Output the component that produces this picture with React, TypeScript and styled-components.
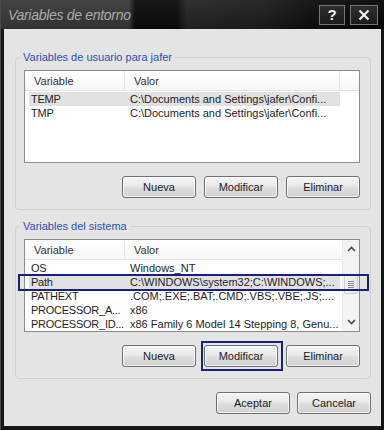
import React from 'react';
import styled, { createGlobalStyle, css } from 'styled-components';

const GlobalStyle = createGlobalStyle`
  html, body {
    margin: 0;
    padding: 0;
    background: #1b1b1b;
  }
  * {
    box-sizing: border-box;
  }
`;

const UI_FONT = `"Liberation Sans", Arial, sans-serif`;

// Window chrome
const Window = styled.div`
  width: 384px;
  height: 430px;
  display: flex;
  flex-direction: column;
  background: #161616;
  border-left: 1px solid #4a4a4a;
  font-family: ${UI_FONT};
  font-size: 11px;
  color: #1e1e1e;
`;

const TitleBar = styled.div`
  height: 29px;
  flex: none;
  display: flex;
  align-items: center;
  padding: 0 6px 0 7px;
  background:
    linear-gradient(to bottom, rgba(255, 255, 255, 0.05), rgba(0, 0, 0, 0.15)),
    linear-gradient(
      to right,
      #3b3b3b 0,
      #3a3a3a 128px,
      #0b0b0b 134px,
      #0c0c0c 176px,
      #262626 186px,
      #1e1e1e 260px,
      #0e0e0e 310px,
      #050505 384px
    );
`;

const Title = styled.span`
  font-family: ${UI_FONT};
  font-style: italic;
  font-size: 14px;
  letter-spacing: -0.3px;
  color: #ababab;
`;

const CaptionButtons = styled.div`
  margin-left: auto;
  display: flex;
  gap: 5px;
`;

const CaptionButton = styled.div<{ $wide?: boolean }>`
  width: ${(p) => (p.$wide ? 28 : 26)}px;
  height: 20px;
  display: flex;
  align-items: center;
  justify-content: center;
  border: 1px solid #767676;
  background: linear-gradient(to bottom, #2e2e2e, #1c1c1c);
  color: #f2f2f2;
  font-family: ${UI_FONT};
  font-weight: bold;
  font-size: 15px;
`;

const Client = styled.div`
  flex: 1;
  margin: 0 3px 4px 3px;
  padding: 21px 10px 0 11px;
  background: #e4e4e4;
  display: flex;
  flex-direction: column;
`;

// Group box
const Group = styled.fieldset<{ $spaced?: boolean }>`
  margin: ${(p) => (p.$spaced ? '9px 0 0 0' : '0')};
  padding: 6px 10px 11px 8px;
  border: 1px solid #d0d0d0;
  border-radius: 4px;
  min-width: 0;
  display: flex;
  flex-direction: column;
`;

const Legend = styled.legend`
  padding: 0 3px;
  margin-left: -4px;
  line-height: 14px;
  font-size: 11px;
  color: #2a50b4;
`;

// List view
const ListBox = styled.div`
  height: 93px;
  display: flex;
  border: 1px solid #8c8c8c;
  background: #ffffff;
`;

const ListContent = styled.div`
  flex: 1;
  display: flex;
  flex-direction: column;
  min-width: 0;
`;

const Header = styled.div`
  height: 20px;
  flex: none;
  display: flex;
  align-items: center;
  border-bottom: 1px solid #e2e2e2;
  background: linear-gradient(to bottom, #ffffff, #f7f7f7);
`;

const HeaderCell = styled.div<{ $width?: number }>`
  ${(p) =>
    p.$width
      ? css`
          width: ${p.$width}px;
          flex: none;
        `
      : css`
          flex: 1;
        `}
  height: 100%;
  display: flex;
  align-items: center;
  padding-left: 9px;
  border-right: 1px solid #e4e4e4;
  color: #333333;
  white-space: nowrap;
  &:last-child {
    border-right: none;
  }
`;

const Rows = styled.div`
  padding-top: 1px;
  display: flex;
  flex-direction: column;
`;

const Row = styled.div<{ $selected?: boolean; $marked?: boolean }>`
  position: relative;
  height: 14px;
  width: 311px;
  margin-left: 4px;
  display: flex;
  align-items: center;
  background: ${(p) => (p.$selected ? '#e1e1e1' : 'transparent')};
  color: #1e1e1e;
  white-space: nowrap;
  ${(p) =>
    p.$marked &&
    css`
      &::after {
        content: '';
        position: absolute;
        top: -1px;
        bottom: -2px;
        left: -11px;
        right: -29px;
        border: 2px solid #1d1f7e;
        pointer-events: none;
      }
    `}
`;

const NameCell = styled.div`
  width: 96px;
  flex: none;
  padding-left: 2px;
  letter-spacing: -0.25px;
  overflow: visible;
`;

const ValueCell = styled.div`
  flex: 1;
  padding-left: 5px;
  overflow: hidden;
`;

// Scroll bar
const ScrollBar = styled.div`
  width: 17px;
  flex: none;
  display: flex;
  flex-direction: column;
  background: #f3f3f3;
  border-left: 1px solid #ececec;
`;

const ArrowButton = styled.div`
  height: 18px;
  flex: none;
  display: flex;
  align-items: center;
  justify-content: center;
`;

const Track = styled.div`
  flex: 1;
  display: flex;
  flex-direction: column;
  align-items: center;
`;

const Thumb = styled.div`
  margin-top: 16px;
  width: 14px;
  height: 20px;
  border: 1px solid #cfcfcf;
  border-radius: 2px;
  background: linear-gradient(to right, #f4f4f4, #e6e6e6);
  display: flex;
  flex-direction: column;
  align-items: center;
  justify-content: center;
  gap: 1px;
`;

const GripLine = styled.div`
  width: 6px;
  height: 1px;
  background: #8a8a8a;
`;

// Buttons
const ButtonRow = styled.div<{ $gap: number; $top: number }>`
  margin-top: ${(p) => p.$top}px;
  display: flex;
  justify-content: flex-end;
  gap: ${(p) => p.$gap}px;
`;

const PushButton = styled.div<{ $marked?: boolean }>`
  position: relative;
  width: 74px;
  height: 22px;
  display: flex;
  align-items: center;
  justify-content: center;
  border: 1px solid #707070;
  border-radius: 3px;
  background: linear-gradient(to bottom, #f4f4f4 0%, #e9e9e9 45%, #dddddd 55%, #d2d2d2 100%);
  box-shadow: inset 0 0 0 1px rgba(255, 255, 255, 0.7);
  color: #1c1c1c;
  font-size: 11px;
  ${(p) =>
    p.$marked &&
    css`
      &::after {
        content: '';
        position: absolute;
        top: -5px;
        bottom: -5px;
        left: -4px;
        right: -6px;
        border: 2px solid #1d1f7e;
        pointer-events: none;
      }
    `}
`;

const Chevron = ({ up }: { up?: boolean }) => (
  <svg width="9" height="6" viewBox="0 0 9 6">
    <polyline
      points={up ? '1,5 4.5,1.5 8,5' : '1,1 4.5,4.5 8,1'}
      fill="none"
      stroke="#4a4a4a"
      strokeWidth="1.6"
    />
  </svg>
);

const CloseGlyph = () => (
  <svg width="12" height="12" viewBox="0 0 12 12">
    <path d="M1.5 1.5 L10.5 10.5 M10.5 1.5 L1.5 10.5" stroke="#f2f2f2" strokeWidth="2.2" />
  </svg>
);

const userVars = [
  { name: 'TEMP', value: 'C:\\Documents and Settings\\jafer\\Confi...' },
  { name: 'TMP', value: 'C:\\Documents and Settings\\jafer\\Confi...' },
];

const systemVars = [
  { name: 'OS', value: 'Windows_NT' },
  { name: 'Path', value: 'C:\\WINDOWS\\system32;C:\\WINDOWS;...' },
  { name: 'PATHEXT', value: '.COM;.EXE;.BAT;.CMD;.VBS;.VBE;.JS;....' },
  { name: 'PROCESSOR_A...', value: 'x86' },
  { name: 'PROCESSOR_ID...', value: 'x86 Family 6 Model 14 Stepping 8, Genu...' },
];

const App: React.FC = () => {
  return (
    <>
      <GlobalStyle />
      <Window>
        <TitleBar>
          <Title>Variables de entorno</Title>
          <CaptionButtons>
            <CaptionButton>?</CaptionButton>
            <CaptionButton $wide>
              <CloseGlyph />
            </CaptionButton>
          </CaptionButtons>
        </TitleBar>

        <Client>
          <Group>
            <Legend>Variables de usuario para jafer</Legend>
            <ListBox>
              <ListContent>
                <Header>
                  <HeaderCell $width={100}>Variable</HeaderCell>
                  <HeaderCell $width={215}>Valor</HeaderCell>
                  <HeaderCell />
                </Header>
                <Rows>
                  {userVars.map((v, i) => (
                    <Row key={v.name} $selected={i === 0}>
                      <NameCell>{v.name}</NameCell>
                      <ValueCell>{v.value}</ValueCell>
                    </Row>
                  ))}
                </Rows>
              </ListContent>
            </ListBox>
            <ButtonRow $gap={8} $top={13}>
              <PushButton>Nueva</PushButton>
              <PushButton>Modificar</PushButton>
              <PushButton>Eliminar</PushButton>
            </ButtonRow>
          </Group>

          <Group $spaced>
            <Legend>Variables del sistema</Legend>
            <ListBox>
              <ListContent>
                <Header>
                  <HeaderCell $width={100}>Variable</HeaderCell>
                  <HeaderCell>Valor</HeaderCell>
                </Header>
                <Rows>
                  {systemVars.map((v) => (
                    <Row key={v.name} $selected={v.name === 'Path'} $marked={v.name === 'Path'}>
                      <NameCell>{v.name}</NameCell>
                      <ValueCell>{v.value}</ValueCell>
                    </Row>
                  ))}
                </Rows>
              </ListContent>
              <ScrollBar>
                <ArrowButton>
                  <Chevron up />
                </ArrowButton>
                <Track>
                  <Thumb>
                    <GripLine />
                    <GripLine />
                    <GripLine />
                    <GripLine />
                  </Thumb>
                </Track>
                <ArrowButton>
                  <Chevron />
                </ArrowButton>
              </ScrollBar>
            </ListBox>
            <ButtonRow $gap={8} $top={13}>
              <PushButton>Nueva</PushButton>
              <PushButton $marked>Modificar</PushButton>
              <PushButton>Eliminar</PushButton>
            </ButtonRow>
          </Group>

          <ButtonRow $gap={7} $top={13}>
            <PushButton>Aceptar</PushButton>
            <PushButton>Cancelar</PushButton>
          </ButtonRow>
        </Client>
      </Window>
    </>
  );
};

export default App;
